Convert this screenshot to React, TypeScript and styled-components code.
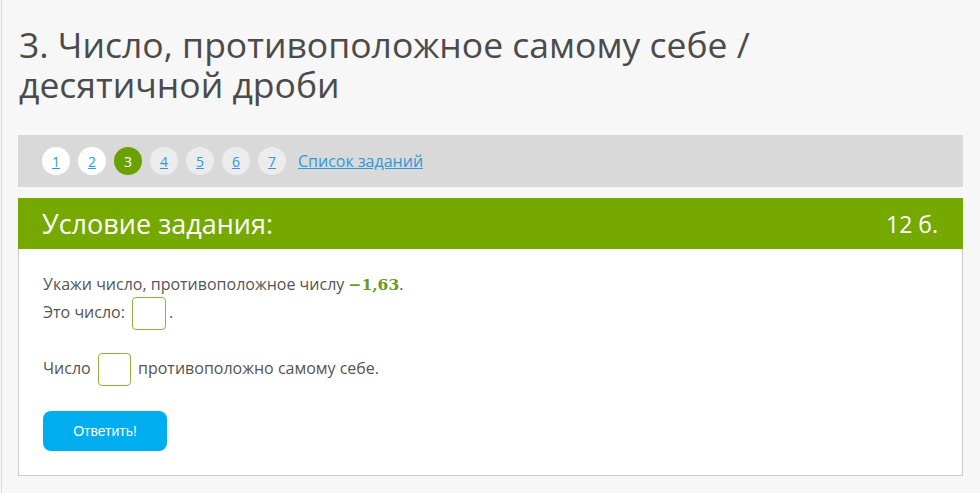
import React from 'react';
import { styled, createGlobalStyle } from 'styled-components';

const GlobalStyle = createGlobalStyle`
  html, body {
    margin: 0;
    padding: 0;
    background: #f7f7f7;
  }
  body {
    font-family: 'Open Sans', 'Noto Sans', sans-serif;
  }
`;

const Page = styled.div`
  min-height: 493px;
  box-sizing: border-box;
  margin-left: 1px;
  border-left: 1px solid #dcdcdc;
  padding: 24px 17px 18px 16px;
`;

const Title = styled.h1`
  margin: 0 0 31px 1px;
  font-size: 35.5px;
  line-height: 40px;
  font-weight: 400;
  color: #4b4b4b;
`;

const Nav = styled.nav`
  display: flex;
  align-items: center;
  gap: 8px;
  height: 52px;
  padding: 0 24px;
  background: #d9d9d9;
  margin-bottom: 11px;
`;

const Step = styled.a<{ $state: 'done' | 'current' | 'todo' }>`
  width: 28px;
  height: 28px;
  border-radius: 50%;
  display: flex;
  align-items: center;
  justify-content: center;
  font-size: 14px;
  color: ${(p) => (p.$state === 'current' ? '#fff' : '#2f9ad6')};
  text-decoration: ${(p) => (p.$state === 'current' ? 'none' : 'underline')};
  background: ${(p) =>
    p.$state === 'current' ? '#6aa000' : p.$state === 'done' ? '#ffffff' : '#ececec'};
  cursor: pointer;
`;

const ListLink = styled.a`
  margin-left: 4px;
  font-size: 16px;
  color: #2f9ad6;
  text-decoration: underline;
  cursor: pointer;
`;

const Card = styled.section`
  border: 1px solid #cccccc;
  border-top: none;
  background: #fff;
`;

const CardHead = styled.header`
  display: flex;
  justify-content: space-between;
  align-items: center;
  height: 51px;
  padding: 0 25px 0 24px;
  margin: 0 -1px;
  background: #76a900;
  color: #fff;
  font-size: 27px;
`;

const Points = styled.span`
  font-size: 23px;
`;

const CardBody = styled.div`
  padding: 23px 24px 24px 24px;
  font-size: 16px;
  color: #555;
`;

const Line = styled.div<{ $gap?: number }>`
  line-height: 24px;
  margin-top: ${(p) => p.$gap ?? 0}px;
`;

const Math = styled.span`
  font-family: 'DejaVu Serif', 'Liberation Serif', serif;
  font-size: 15.5px;
  font-weight: 700;
  color: #6a9a1f;
`;

const AnswerBox = styled.input<{ $w?: number }>`
  box-sizing: border-box;
  width: ${(p) => p.$w ?? 34}px;
  height: 33px;
  margin: 0 3px;
  padding: 0;
  vertical-align: middle;
  border: 1px solid #8fb23c;
  border-radius: 4px;
  background: #fff;
  outline: none;
`;

const Button = styled.button`
  display: block;
  margin-top: 25px;
  width: 124px;
  height: 40px;
  border: none;
  border-radius: 8px;
  background: #00aeef;
  color: #fff;
  font-family: 'Liberation Sans', Arial, sans-serif;
  font-size: 14px;
  cursor: pointer;
`;

const steps: Array<'done' | 'current' | 'todo'> = [
  'done',
  'done',
  'current',
  'todo',
  'todo',
  'todo',
  'todo',
];

export default function App() {
  return (
    <>
      <GlobalStyle />
      <Page>
        <Title>
          3. Число, противоположное самому себе /
          <br />
          десятичной дроби
        </Title>
        <Nav>
          {steps.map((s, i) => (
            <Step key={i} $state={s}>
              {i + 1}
            </Step>
          ))}
          <ListLink>Список заданий</ListLink>
        </Nav>
        <Card>
          <CardHead>
            <span>Условие задания:</span>
            <Points>12 б.</Points>
          </CardHead>
          <CardBody>
            <Line>
              Укажи число, противоположное числу <Math>−1,63</Math>.
            </Line>
            <Line>
              Это число: <AnswerBox />.
            </Line>
            <Line $gap={23}>
              Число <AnswerBox $w={33} /> противоположно самому себе.
            </Line>
            <Button>Ответить!</Button>
          </CardBody>
        </Card>
      </Page>
    </>
  );
}
